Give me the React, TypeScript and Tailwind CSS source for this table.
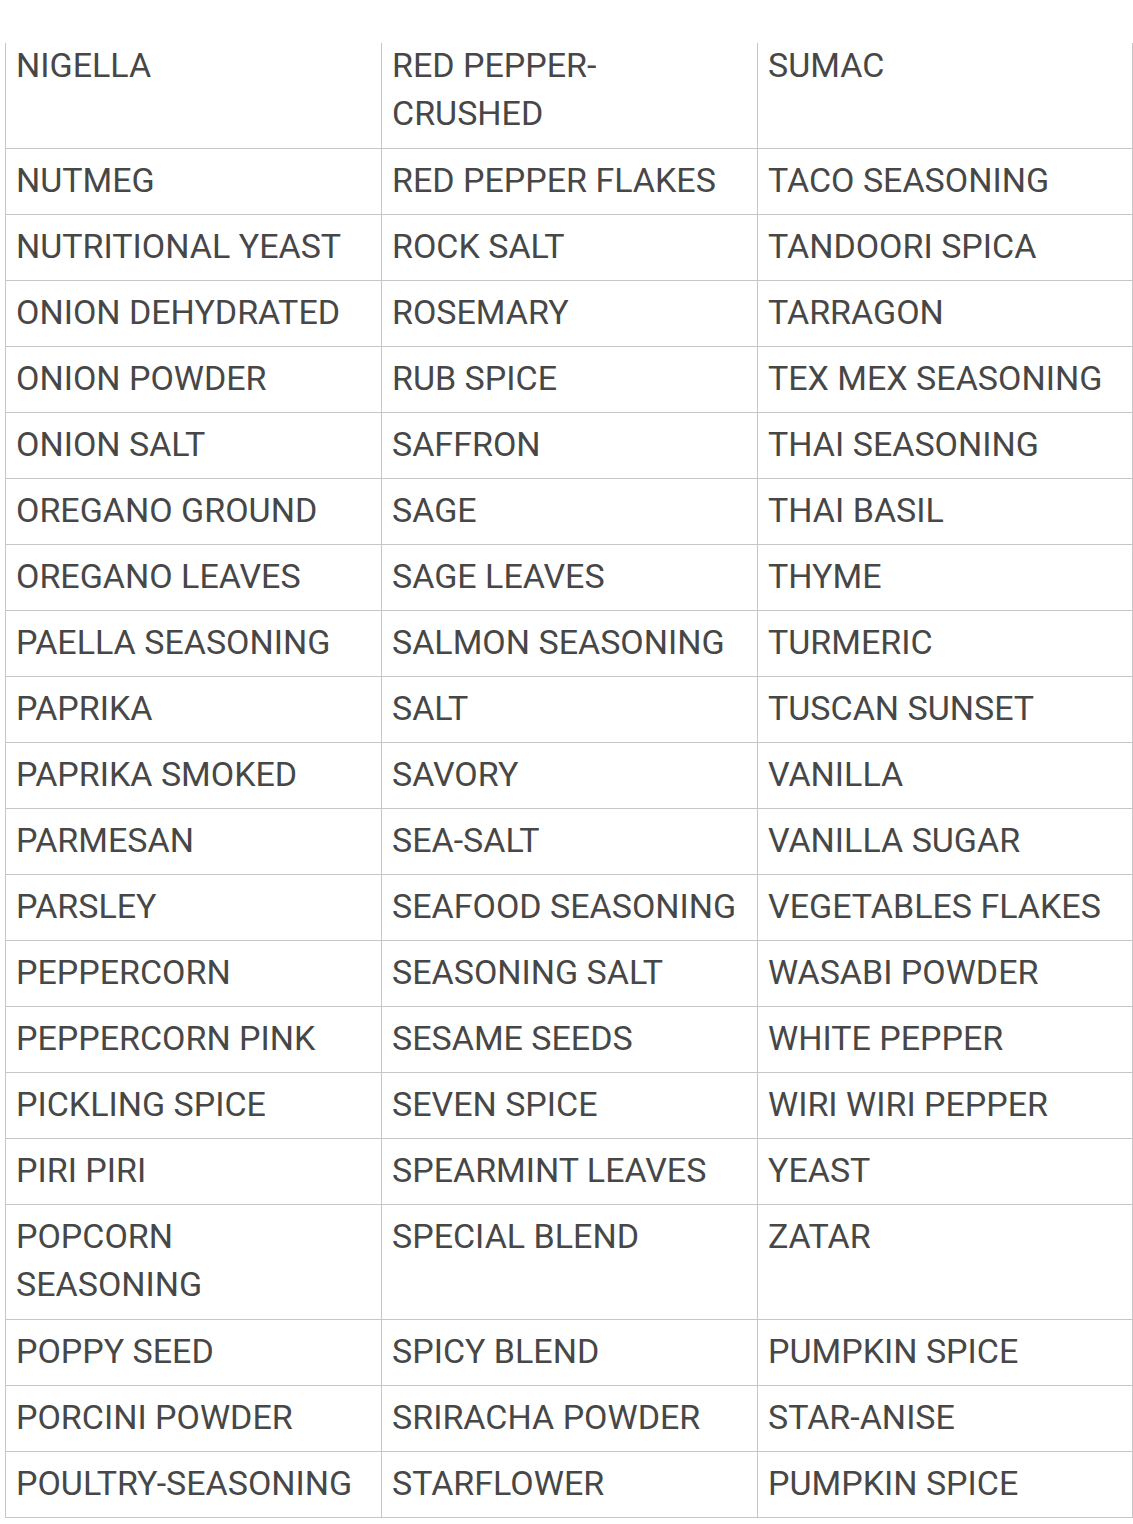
import React from 'react';

// each row: [col1, col2, col3]; "\n" marks a forced line break
const rows: string[][] = [
    ['NIGELLA', 'RED PEPPER-\nCRUSHED', 'SUMAC'],
    ['NUTMEG', 'RED PEPPER FLAKES', 'TACO SEASONING'],
    ['NUTRITIONAL YEAST', 'ROCK SALT', 'TANDOORI SPICA'],
    ['ONION DEHYDRATED', 'ROSEMARY', 'TARRAGON'],
    ['ONION POWDER', 'RUB SPICE', 'TEX MEX SEASONING'],
    ['ONION SALT', 'SAFFRON', 'THAI SEASONING'],
    ['OREGANO GROUND', 'SAGE', 'THAI BASIL'],
    ['OREGANO LEAVES', 'SAGE LEAVES', 'THYME'],
    ['PAELLA SEASONING', 'SALMON SEASONING', 'TURMERIC'],
    ['PAPRIKA', 'SALT', 'TUSCAN SUNSET'],
    ['PAPRIKA SMOKED', 'SAVORY', 'VANILLA'],
    ['PARMESAN', 'SEA-SALT', 'VANILLA SUGAR'],
    ['PARSLEY', 'SEAFOOD SEASONING', 'VEGETABLES FLAKES'],
    ['PEPPERCORN', 'SEASONING SALT', 'WASABI POWDER'],
    ['PEPPERCORN PINK', 'SESAME SEEDS', 'WHITE PEPPER'],
    ['PICKLING SPICE', 'SEVEN SPICE', 'WIRI WIRI PEPPER'],
    ['PIRI PIRI', 'SPEARMINT LEAVES', 'YEAST'],
    ['POPCORN\nSEASONING', 'SPECIAL BLEND', 'ZATAR'],
    ['POPPY SEED', 'SPICY BLEND', 'PUMPKIN SPICE'],
    ['PORCINI POWDER', 'SRIRACHA POWDER', 'STAR-ANISE'],
    ['POULTRY-SEASONING', 'STARFLOWER', 'PUMPKIN SPICE'],
];

const App: React.FC = () => {
    return (
        <div className="min-h-screen bg-white pt-[43px]" style={{ fontFamily: 'Roboto, "Liberation Sans", Arial, sans-serif' }}>
            <div className="ml-[5px] w-[1128px] overflow-hidden pb-[2px]">
                {/* first row is scrolled slightly out of view at the top */}
                <table className="-mt-[10px] w-[1127px] table-fixed border-collapse text-[34px] leading-[48px] text-[#474747]">
                    <colgroup>
                        <col className="w-[376px]" />
                        <col className="w-[376px]" />
                        <col className="w-[375px]" />
                    </colgroup>
                    <tbody>
                        {rows.map((row, i) => {
                            const twoLine = row.some(c => c.includes('\n'));
                            return (
                                <tr key={i}>
                                    {row.map((cell, j) => (
                                        <td
                                            key={j}
                                            className={`border border-[#c6c6c6] align-top whitespace-pre pl-[10px] pr-1 pt-[7px] ${twoLine ? 'pb-[11px]' : 'pb-[10px]'}`}
                                        >
                                            {cell}
                                        </td>
                                    ))}
                                </tr>
                            );
                        })}
                    </tbody>
                </table>
            </div>
        </div>
    );
};

export default App;
